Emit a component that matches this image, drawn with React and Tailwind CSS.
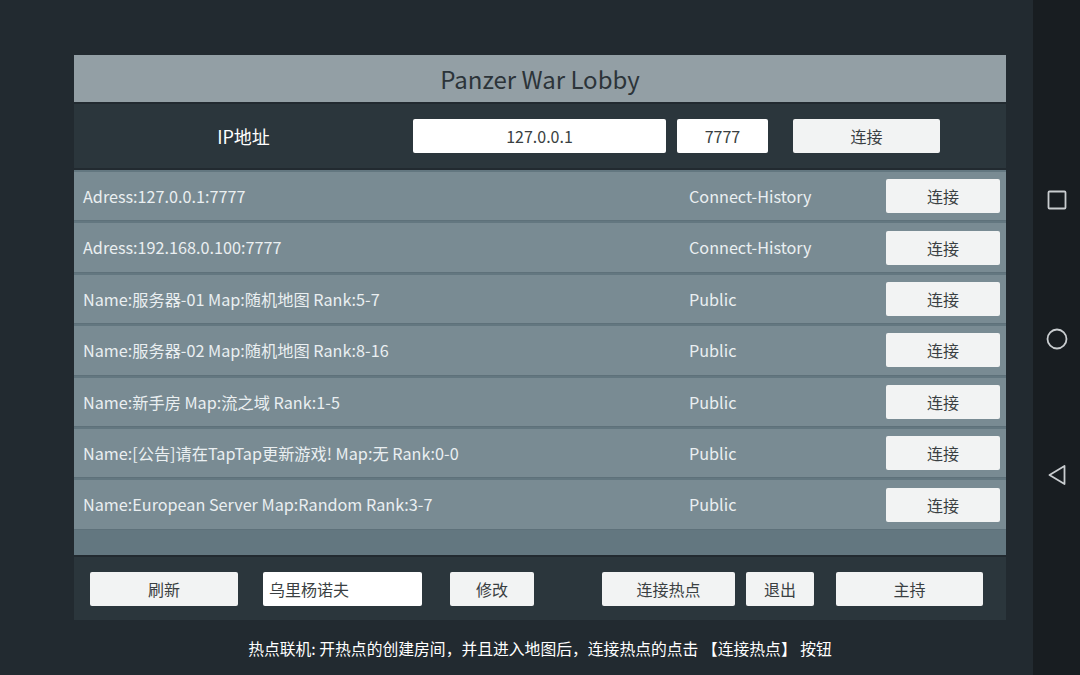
const rows = [
  { name: "Adress:127.0.0.1:7777", type: "Connect-History" },
  { name: "Adress:192.168.0.100:7777", type: "Connect-History" },
  { name: "Name:服务器-01 Map:随机地图 Rank:5-7", type: "Public" },
  { name: "Name:服务器-02 Map:随机地图 Rank:8-16", type: "Public" },
  { name: "Name:新手房 Map:流之域 Rank:1-5", type: "Public" },
  { name: "Name:[公告]请在TapTap更新游戏! Map:无 Rank:0-0", type: "Public" },
  { name: "Name:European Server Map:Random Rank:3-7", type: "Public" },
];

const font = { fontFamily: '"Noto Sans CJK SC", "Noto Sans", sans-serif' };

const Btn = ({ children, className = "" }) => (
  <div className={`h-[34px] flex items-center justify-center bg-[#f2f3f3] rounded-[2px] text-[16px] text-[#3a3f42] ${className}`}>
    {children}
  </div>
);

const App = () => (
  <div className="w-[1080px] h-[675px] flex bg-[#222a30] overflow-hidden" style={font}>
    {/* Main area */}
    <div className="w-[1033px] flex flex-col">
      <div className="ml-[74px] mt-[55px] w-[932px] flex flex-col">
        {/* Title */}
        <div className="h-[47px] bg-[#939fa5] flex items-center justify-center text-[24px] text-[#2c3439]">
          Panzer War Lobby
        </div>

        {/* IP row */}
        <div className="mt-[2px] h-[64px] bg-[#2b363c] flex items-center">
          <div className="w-[339px] text-center text-white text-[18px]">IP地址</div>
          <div className="w-[253px] h-[34px] bg-white rounded-[2px] flex items-center justify-center text-[16px] text-[#3a3f42]">127.0.0.1</div>
          <div className="ml-[11px] w-[91px] h-[34px] bg-white rounded-[2px] flex items-center justify-center text-[16px] text-[#3a3f42]">7777</div>
          <Btn className="ml-[25px] w-[147px]">连接</Btn>
        </div>

        {/* List */}
        <div className="mt-[2px] h-[385px] bg-[#637780] flex flex-col gap-[2px] pt-[2px]">
          {rows.map((r, i) => (
            <div key={i} className="h-[49.4px] shrink-0 bg-[#798b93] border-b border-[#5e717a] flex items-center text-[16.2px] text-[#eaeff1]">
              <div className="pl-[9px] w-[615px] truncate">{r.name}</div>
              <div className="w-[197px]">{r.type}</div>
              <Btn className="w-[114px]">连接</Btn>
            </div>
          ))}
        </div>

        {/* Bottom bar */}
        <div className="mt-[2px] h-[63px] bg-[#2b363c] flex items-center pl-[16px]">
          <Btn className="w-[148px]">刷新</Btn>
          <div className="ml-[25px] w-[159px] h-[34px] bg-white rounded-[2px] flex items-center pl-[6px] text-[16px] text-[#3a3f42]">乌里杨诺夫</div>
          <Btn className="ml-[28px] w-[84px]">修改</Btn>
          <Btn className="ml-[68px] w-[133px]">连接热点</Btn>
          <Btn className="ml-[11px] w-[68px]">退出</Btn>
          <Btn className="ml-[22px] w-[147px]">主持</Btn>
        </div>
      </div>

      {/* Footer hint, centred on the whole screen */}
      <div className="mt-[17px] w-[1080px] text-center text-white text-[15.8px]">
        热点联机: 开热点的创建房间，并且进入地图后，连接热点的点击 【连接热点】 按钮
      </div>
    </div>

    {/* Android nav bar */}
    <div className="w-[47px] h-full shrink-0 bg-[#181d21] flex flex-col items-center pt-[190px]">
      <svg width="20" height="20" viewBox="0 0 20 20">
        <rect x="1.5" y="1.5" width="17" height="17" rx="1" fill="none" stroke="#c9cdd0" strokeWidth="1.8" />
      </svg>
      <svg className="mt-[118px]" width="22" height="22" viewBox="0 0 22 22">
        <circle cx="11" cy="11" r="9.5" fill="none" stroke="#c9cdd0" strokeWidth="1.8" />
      </svg>
      <svg className="mt-[114px]" width="20" height="22" viewBox="0 0 20 22">
        <path d="M17.5 2 L2.5 11 L17.5 20 Z" fill="none" stroke="#c9cdd0" strokeWidth="1.8" strokeLinejoin="round" />
      </svg>
    </div>
  </div>
);

export default App;
